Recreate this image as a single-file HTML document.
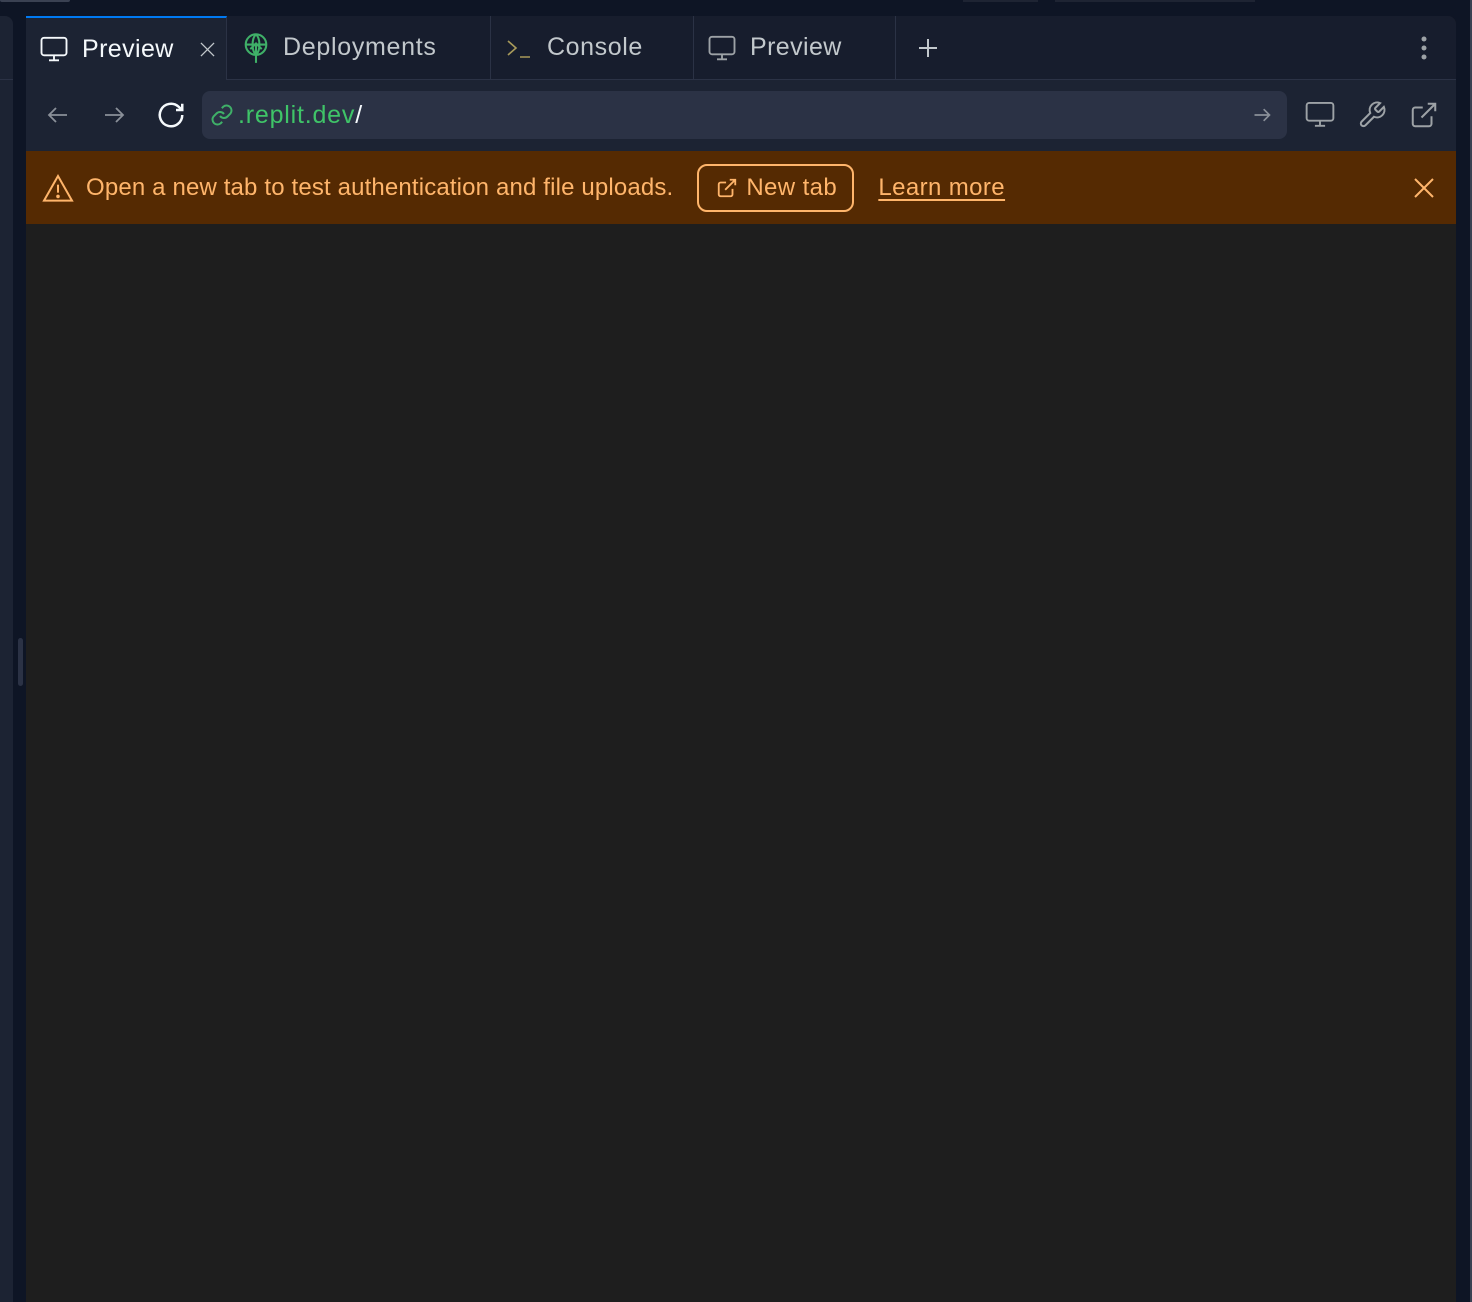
<!DOCTYPE html>
<html><head><meta charset="utf-8"><style>
*{margin:0;padding:0;box-sizing:border-box}
body{width:1472px;height:1302px;background:#0e1525;position:relative;overflow:hidden;font-family:"Liberation Sans",sans-serif}
.abs{position:absolute}
.tab{position:absolute;top:16px;height:63px;display:flex;align-items:center;font-size:25px;color:#c2c8cc;border-right:1px solid #2b3245;background:#171d2d;letter-spacing:0.4px}
svg{display:block}
</style></head><body>
<div class="abs" style="left:0;top:0;width:70px;height:2px;background:#3a4152;border-radius:0 0 4px 4px"></div>
<div class="abs" style="left:963px;top:0;width:75px;height:2px;background:#1e2433"></div>
<div class="abs" style="left:1055px;top:0;width:200px;height:2px;background:#1e2433"></div>
<div class="abs" style="left:0;top:16px;width:13px;height:1286px;background:#1c2333;border-radius:0 8px 0 0"></div>
<div class="abs" style="left:0;top:79px;width:13px;height:1px;background:#2b3245"></div>
<div class="abs" style="left:18px;top:638px;width:5px;height:48px;background:#2b3245;border-radius:3px"></div>
<div class="abs" style="left:1470px;top:0;width:2px;height:1302px;background:#3a4152"></div>
<div class="abs" style="left:26px;top:16px;width:1430px;height:1286px;background:#1e1e1e;border-radius:8px 8px 0 0;overflow:hidden">
 <div class="abs" style="left:0;top:0;width:1430px;height:63px;background:#171d2d"></div>
 <div class="abs" style="left:0;top:63px;width:1430px;height:1px;background:#2b3245"></div>
 <div class="abs" style="left:0;top:64px;width:1430px;height:71px;background:#1c2333"></div>
</div>
<div class="tab" style="left:26px;width:201px;background:#1c2333;color:#f5f9fc;border-top:2px solid #0079f2;height:64px">
 <svg style="margin-left:13px" width="30" height="30" viewBox="0 0 24 24" fill="none" stroke="#f5f9fc" stroke-width="1.5"><rect x="2" y="3" width="20" height="14" rx="2"/><path d="M12 17v4M8 21h8"/></svg>
 <span style="margin-left:13px">Preview</span>
 <svg style="margin-left:26px" width="15" height="15" viewBox="0 0 16 16" stroke="#c2c8cc" stroke-width="1.4"><path d="M1 1l14 14M15 1L1 15"/></svg>
</div>
<div class="tab" style="left:227px;width:264px">
 <svg style="margin-left:15px" width="28" height="32" viewBox="0 0 24 28" fill="none" stroke="#3fb068" stroke-width="1.8"><circle cx="12" cy="11" r="9"/><path d="M3 11h18M12 2c-4 4-4 14 0 18M12 2c4 4 4 14 0 18M12 10v17M7 15l5-5 5 5"/></svg>
 <span style="margin-left:13px;letter-spacing:0.7px">Deployments</span>
</div>
<div class="tab" style="left:491px;width:203px">
 <svg style="margin-left:15px" width="26" height="24" viewBox="0 0 26 24" fill="none" stroke="#a89a5a" stroke-width="1.6"><path d="M2 5l8 7-8 7M14 21h10"/></svg>
 <span style="margin-left:15px;letter-spacing:0.6px">Console</span>
</div>
<div class="tab" style="left:694px;width:202px">
 <svg style="margin-left:13px" width="30" height="30" viewBox="0 0 24 24" fill="none" stroke="#9da2a6" stroke-width="1.5"><rect x="2" y="3" width="20" height="14" rx="2"/><path d="M12 17v4M8 21h8"/></svg>
 <span style="margin-left:13px">Preview</span>
</div>
<svg class="abs" style="left:917px;top:37px" width="22" height="22" viewBox="0 0 22 22" stroke="#c2c8cc" stroke-width="2"><path d="M11 2v18M2 11h18"/></svg>
<svg class="abs" style="left:1419px;top:35px" width="10" height="26" viewBox="0 0 10 26" fill="#9da2a6"><circle cx="5" cy="4" r="2.5"/><circle cx="5" cy="13" r="2.5"/><circle cx="5" cy="22" r="2.5"/></svg>
<svg class="abs" style="left:45px;top:103px" width="26" height="24" viewBox="0 0 24 24" fill="none" stroke="#8a9099" stroke-width="1.8"><path d="M21 12H3M10 5l-7 7 7 7"/></svg>
<svg class="abs" style="left:101px;top:103px" width="26" height="24" viewBox="0 0 24 24" fill="none" stroke="#8a9099" stroke-width="1.8"><path d="M3 12h18M14 5l7 7-7 7"/></svg>
<svg class="abs" style="left:156px;top:100px" width="30" height="30" viewBox="0 0 24 24" fill="none" stroke="#f5f9fc" stroke-width="2"><path d="M21 12a9 9 0 1 1-3-6.7L21 8M21 3v5h-5"/></svg>
<div class="abs" style="left:202px;top:91px;width:1085px;height:48px;background:#2b3245;border-radius:8px;display:flex;align-items:center">
 <svg style="margin-left:8px" width="24" height="24" viewBox="0 0 24 24" fill="none" stroke="#3fb068" stroke-width="2"><path d="M10 13a5 5 0 0 0 7.5.5l3-3a5 5 0 0 0-7-7l-1.7 1.7"/><path d="M14 11a5 5 0 0 0-7.5-.5l-3 3a5 5 0 0 0 7 7l1.7-1.7"/></svg>
 <span style="margin-left:4px;font-size:25px;color:#3fc468;letter-spacing:0.8px">.replit.dev<span style="color:#f5f9fc">/</span></span>
 <svg style="margin-left:auto;margin-right:15px" width="20" height="20" viewBox="0 0 24 24" fill="none" stroke="#8a9099" stroke-width="2"><path d="M3 12h18M14 5l7 7-7 7"/></svg>
</div>
<svg class="abs" style="left:1304px;top:101px" width="32" height="28" viewBox="0 0 24 22" fill="none" stroke="#9da2a6" stroke-width="1.5"><rect x="1.5" y="1.5" width="21" height="14" rx="2"/><path d="M12 15.5v4M8 19.5h8"/></svg>
<svg class="abs" style="left:1357px;top:100px" width="30" height="30" viewBox="0 0 24 24" fill="none" stroke="#9da2a6" stroke-width="1.6"><path d="M14.7 6.3a1 1 0 0 0 0 1.4l1.6 1.6a1 1 0 0 0 1.4 0l3.8-3.8a6 6 0 0 1-7.9 7.9l-6.9 6.9a2.1 2.1 0 0 1-3-3l6.9-6.9a6 6 0 0 1 7.9-7.9z"/></svg>
<svg class="abs" style="left:1409px;top:100px" width="30" height="30" viewBox="0 0 24 24" fill="none" stroke="#9da2a6" stroke-width="1.6"><path d="M18 13v6a2 2 0 0 1-2 2H5a2 2 0 0 1-2-2V8a2 2 0 0 1 2-2h6M15 3h6v6M10 14L21 3"/></svg>
<div class="abs" style="left:26px;top:151px;width:1430px;height:73px;background:#552a02;display:flex;align-items:center;color:#ffb56b;font-size:24px">
 <svg style="margin-left:16px" width="32" height="30" viewBox="0 0 24 22" fill="none" stroke="#ffb56b" stroke-width="1.5"><path d="M12 2L1.5 20.5h21z"/><path d="M12 8.5v6"/><circle cx="12" cy="17.3" r=".6" fill="#ffb56b"/></svg>
 <span style="margin-left:12px;letter-spacing:0.15px">Open a new tab to test authentication and file uploads.</span>
 <div style="margin-left:24px;height:48px;width:157px;border:2px solid #ffb56b;border-radius:10px;display:flex;align-items:center">
  <svg style="margin-left:17px" width="22" height="22" viewBox="0 0 24 24" fill="none" stroke="#ffb56b" stroke-width="2"><path d="M18 13v6a2 2 0 0 1-2 2H5a2 2 0 0 1-2-2V8a2 2 0 0 1 2-2h6M15 3h6v6M10 14L21 3"/></svg>
  <span style="margin-left:8px;letter-spacing:0.4px">New tab</span>
 </div>
 <span style="margin-left:24px;text-decoration:underline;text-underline-offset:4px;letter-spacing:0.4px">Learn more</span>
 <svg style="margin-left:auto;margin-right:22px" width="20" height="20" viewBox="0 0 20 20" stroke="#ffb56b" stroke-width="2"><path d="M1 1l18 18M19 1L1 19"/></svg>
</div>
</body></html>
